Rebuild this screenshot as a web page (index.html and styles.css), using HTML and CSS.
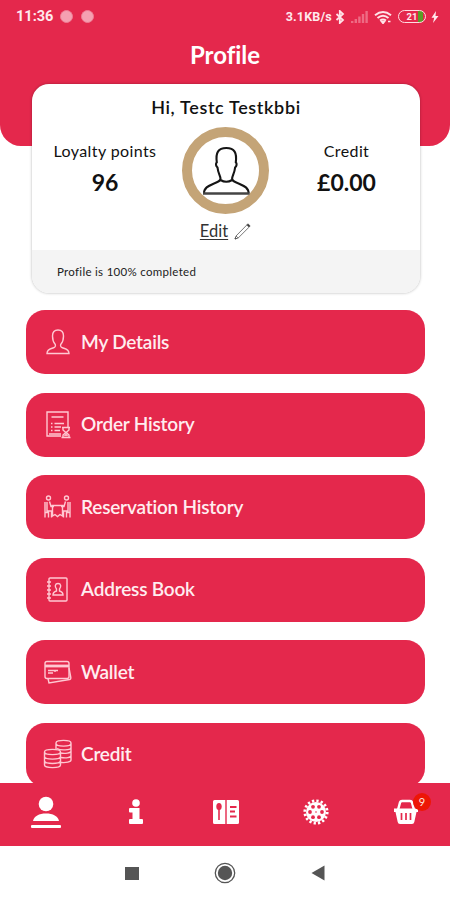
FILE: index.html
```html
<!DOCTYPE html>
<html lang="en">
<head>
    <meta charset="UTF-8">
    <meta name="viewport" content="width=device-width, initial-scale=1.0">
    <title>Profile</title>
    <link rel="stylesheet" href="styles.css">
</head>
<body>
    <div class="screen">
        <header class="header">
            <div class="status-bar">
                <div class="status-left">
                    <span class="time">11:36</span>
                    <span class="dot"></span>
                    <span class="dot"></span>
                </div>
                <div class="status-right">
                    <span class="speed">3.1KB/s</span>
                    <svg class="bluetooth" width="10" height="14" viewBox="0 0 10 14" fill="none" stroke="#ffe3e8" stroke-width="1.8"><path d="M1.5 4l6.5 6-3.2 3V1L8 4l-6.5 6"/></svg>
                    <svg class="signal" width="18" height="14" viewBox="0 0 18 14" fill="#ee6b84"><path d="M0 11h2.4v2H0zM3.6 9H6v4H3.600zM7.200 6.500h2.400V13H7.200zM10.800 4h2.400v9h-2.400zM14.400 1h2.400v12h-2.400z"/></svg>
                    <svg class="wifi" width="18" height="14" viewBox="0 0 18 14" fill="none" stroke="#ffe3e8" stroke-width="2"><path d="M1 5.200Q9-1.200 17 5.200M3.500 8Q9 3.500 14.500 8M6 10.500q3-2.200 6 0"/><path d="M7.500 11.500h3L9 13.500zM14 11.500h2.500" stroke-width="1.500"/></svg>
                    <span class="battery"><span class="battery-text">21</span></span>
                    <svg class="bolt" width="8" height="12" viewBox="0 0 8 12" fill="#ffe9ed"><path d="M5 0L.5 6.800h2.700L2 12l5.500-7H4.500z"/></svg>
                </div>
            </div>
            <h1 class="title">Profile</h1>
        </header>

        <section class="card">
            <h2 class="greeting">Hi, Testc Testkbbi</h2>
            <div class="summary">
                <div class="stat">
                    <span class="stat-label">Loyalty points</span>
                    <span class="stat-value">96</span>
                </div>
                <div class="profile">
                    <div class="avatar">
                        <svg width="50" height="52" viewBox="0 0 50 52" fill="none" stroke="#151515" stroke-width="2.1"><path d="M3 48.500c0-5.500 4-7.500 9.500-9.800C17 37 19.500 36 19.500 33.500c0-2.500-2.500-5.500-3-11-1.700-1.500-2-4-.7-5.200C14.500 8 17 3 25.300 3S36 8 34.800 17.300c1.300 1.200 1 3.700-.7 5.200-.5 5.500-3 8.500-3 11 0 2.500 2.500 3.500 7 5.200 5.500 2.300 9.500 4.300 9.500 9.800M19.500 35q5.800 3.500 11.600 0"/><path d="M2 48.500h46.500" stroke="#444" stroke-width="2.600"/></svg>
                    </div>
                    <a class="edit" href="#">
                        <span class="edit-text">Edit</span>
                        <svg width="17" height="17" viewBox="0 0 17 17" fill="none" stroke="#555" stroke-width=".8"><path d="M1 16l1-3L12.800 2l2.200 2.200L4.200 15zM2 13l2.200 2"/><path d="M13 1.800l1-1 2.200 2.200-1 1zM1 16l.5-1.500 1 1z" fill="#333"/></svg>
                    </a>
                </div>
                <div class="stat">
                    <span class="stat-label">Credit</span>
                    <span class="stat-value">£0.00</span>
                </div>
            </div>
            <div class="completion">Profile is 100% completed</div>
        </section>

        <main class="menu">
            <a class="menu-item" href="#">
                <svg class="menu-icon" viewBox="0 0 30 30"><path d="M4 26.500c0-4 3-4.500 6-5.500 2.500-.8 2.800-1.500 2.300-3.500C10.500 15.500 9.500 12 9.500 9c0-4 2-6 5.500-6s5.500 2 5.500 6c0 3-1 6.500-2.800 8.500-.5 2-.2 2.700 2.300 3.500 3 1 6 1.500 6 5.500z"/></svg>
                <span class="label">My Details</span>
            </a>
            <a class="menu-item" href="#">
                <svg class="menu-icon" viewBox="0 0 30 30"><path d="M18 27H4V3h21v15M8.500 8h12M8 14.500h1.500M11.500 14.500H21M8 18h1.500M11.500 18H18M8 21.500h1.500M11.500 21.500H17M6 25h12"/><path d="M19 18.500h8M20 18.500v2.500l2.800 2.500L20 26v2.500M26 18.500v2.500l-2.800 2.500L26 26v2.500M18.500 28.500h9M21.500 27l1.500-1.500 1.500 1.500"/></svg>
                <span class="label">Order History</span>
            </a>
            <a class="menu-item" href="#">
                <svg class="menu-icon" viewBox="0 0 30 30"><circle cx="5.500" cy="6" r="2"/><circle cx="23.500" cy="6" r="2"/><path d="M4 10v9h4.500v6.500M6.500 9.500l1.500 5h3M2 10v15.500M2 20.500h3.500v5M25 10v9h-4.500v6.500M22.500 9.500l-1.500 5h-3M27 10v15.500M27 20.500h-3.500v5M8.500 13.500h12M9.500 13.500V24l2.500-1.500 2.500 2 2.500-2 2.500 1.500V13.500"/></svg>
                <span class="label">Reservation History</span>
            </a>
            <a class="menu-item" href="#">
                <svg class="menu-icon" viewBox="0 0 30 30"><rect x="6" y="4" width="18" height="23" rx="1"/><path d="M4 8h4M4 12h4M4 16h4M4 20h4M4 24h4M10 21c0-3 1.500-3.500 3.500-4v-2c-2-2.500-1.500-5.500 1.500-5.500s3.500 3 1.500 5.500v2c2 .5 3.500 1 3.500 4z"/></svg>
                <span class="label">Address Book</span>
            </a>
            <a class="menu-item" href="#">
                <svg class="menu-icon" viewBox="0 0 30 30"><rect x="2" y="4.500" width="24" height="17" rx="2"/><path d="M2 9h24" stroke-width="2.800"/><path d="M5 13.500h10M5 16h5M12 13v2M5 21.500l1 4.500 20.500-3.500c1-.2 1.500-1 1.300-2L26 11"/></svg>
                <span class="label">Wallet</span>
            </a>
            <a class="menu-item" href="#">
                <svg class="menu-icon" viewBox="0 0 30 30"><path d="M13 10V4c0-3.500 15-3.500 15 0v17c0 2-5 3-10 2.500M13 4.500c0 3.500 15 3.500 15 0M14 9.500c3 2 14 2 14-1M17 14c5 .8 11 .2 11-2M18 18.500c5 .8 10 .2 10-2"/><path d="M1.500 13c0-3.500 16-3.500 16 0v13c0 3.500-16 3.500-16 0zM1.500 13c0 3.500 16 3.500 16 0M1.500 17.500c0 3.500 16 3.500 16 0M1.500 21.800c0 3.500 16 3.500 16 0"/></svg>
                <span class="label">Credit</span>
            </a>
        </main>

        <nav class="tab-bar">
            <a class="tab" href="#"><svg width="32" height="34" viewBox="0 0 32 34" fill="#fff"><circle cx="16" cy="9" r="7.300"/><path d="M3 26c1-5 6-7.500 13-7.500S28 21 29 26z"/><rect x="1" y="30" width="30" height="3" rx="1"/></svg></a>
            <a class="tab" href="#"><svg width="16" height="26" viewBox="0 0 16 26" fill="#fff"><circle cx="8" cy="4" r="3.800"/><path d="M2 9h9.500v11H14q1 0 1 1v3q0 1-1 1H2q-1 0-1-1v-3q0-1 1-1h2.500v-6.500H2q-1 0-1-1V10q0-1 1-1z"/></svg></a>
            <a class="tab" href="#"><svg width="28" height="26" viewBox="0 0 28 26"><path d="M2.500 1h10.800v24H2.500Q1 25 1 23.500v-21Q1 1 2.500 1zM14.700 1h10.800Q27 1 27 2.500v21q0 1.500-1.500 1.500H14.700z" fill="#fff"/><ellipse cx="7" cy="7.500" rx="2.700" ry="3.500" fill="#e4284c"/><path d="M7 10v11" stroke="#e4284c" stroke-width="1.600"/><path d="M18 8h6.500M18 12.500h5M18 17.500h6.500" stroke="#e4284c" stroke-width="1.800"/></svg></a>
            <a class="tab" href="#"><svg width="28" height="28" viewBox="-14 -14 28 28" fill="none"><circle r="10" fill="#fff"/><circle r="11.200" stroke="#fff" stroke-width="2.800" stroke-dasharray="2.300 2.098"/><g fill="#e4284c"><circle cx="6" cy="0" r="1.900"/><circle cx="-6" cy="0" r="1.900"/><circle cx="3" cy="5.200" r="1.900"/><circle cx="-3" cy="5.200" r="1.900"/><circle cx="3" cy="-5.200" r="1.900"/><circle cx="-3" cy="-5.200" r="1.900"/><circle r=".8"/></g></svg></a>
            <a class="tab" href="#">
                <svg width="26" height="26" viewBox="0 0 26 26"><path d="M5 11L7 3.500Q7.500 2 9 2h8q1.500 0 2 1.500l2 7.500" fill="none" stroke="#fff" stroke-width="2.500"/><path d="M1 9.500h24v3.500h-1.500l-2.200 10Q21 25 19 25H7q-2 0-2.300-2L2.500 13H1z" fill="#fff"/><path d="M8.500 14v7M13 14v7M17.500 14v7" stroke="#e4284c" stroke-width="1.700"/></svg>
                <span class="badge">9</span>
            </a>
        </nav>

        <div class="system-nav">
            <span class="sys"><span class="square"></span></span>
            <span class="sys"><svg width="22" height="22" viewBox="0 0 22 22"><circle cx="11" cy="11" r="9.700" fill="none" stroke="#555" stroke-width="1.300"/><circle cx="11" cy="11" r="7.200" fill="#555"/></svg></span>
            <span class="sys"><svg width="14" height="16" viewBox="0 0 14 16"><path d="M13.500.5v15L.5 8z" fill="#555"/></svg></span>
        </div>
    </div>
</body>
</html>
```

FILE: styles.css
```css
* {
    box-sizing: border-box;
}
body {
    margin: 0;
    font-family: Lato, "Liberation Sans", sans-serif;
    font-variant-ligatures: none;
    background-color: #fff;
    color: #111;
}
a {
    color: inherit;
    text-decoration: none;
}
h1, h2 {
    margin: 0;
}
.screen {
    display: flex;
    flex-direction: column;
    width: 450px;
    height: 900px;
    overflow: hidden;
}
.header {
    flex: none;
    height: 146px;
    background-color: #e4284c;
    border-radius: 0 0 21px 21px;
    color: #fff;
}
.status-bar {
    display: flex;
    justify-content: space-between;
    height: 33px;
    padding: 0 11px 0 16px;
    font-family: Roboto, sans-serif;
    color: #ffe9ed;
}
.status-left, .status-right {
    display: flex;
    align-items: center;
}
.time {
    font-size: 14.5px;
    font-weight: 700;
    margin-right: 7px;
}
.dot {
    width: 13px;
    height: 13px;
    margin-right: 8px;
    border-radius: 50%;
    background-color: #f5a0b1;
    border: 1px solid #f07d95;
}
.speed {
    font-size: 12.5px;
    font-weight: 700;
    letter-spacing: 0.2px;
}
.bluetooth {
    margin-left: 3px;
}
.signal {
    margin-left: 6px;
}
.wifi {
    margin-left: 5px;
}
.battery {
    display: flex;
    justify-content: center;
    align-items: center;
    width: 28px;
    height: 13px;
    margin-left: 6px;
    border: 1.5px solid #ffdce2;
    border-radius: 7px;
    background: linear-gradient(90deg, transparent 74%, #5a9d28 74%, #5a9d28 92%, transparent 92%);
}
.battery-text {
    font-size: 9.5px;
    font-weight: 700;
}
.bolt {
    margin-left: 5px;
}
.title {
    padding-top: 7px;
    font-size: 24px;
    line-height: 29px;
    font-weight: 700;
    text-align: center;
}
.card {
    flex: none;
    display: flex;
    flex-direction: column;
    width: 388px;
    height: 209px;
    margin: -62px 0 0 32px;
    background-color: #fff;
    border-radius: 17px;
    box-shadow: 0 0 3px rgba(0,0,0,0.3);
    overflow: hidden;
}
.greeting {
    padding-top: 12px;
    font-size: 18px;
    line-height: 23px;
    font-weight: 600;
    letter-spacing: 0.65px;
    text-align: center;
}
.summary {
    flex: 1;
    display: grid;
    grid-template-columns: 146px 95px 147px;
}
.stat {
    display: flex;
    flex-direction: column;
    align-items: center;
    padding-top: 22px;
}
.stat-label {
    font-size: 16px;
    line-height: 20px;
    letter-spacing: 0.4px;
}
.stat-value {
    padding-top: 8px;
    font-size: 23px;
    line-height: 27px;
    font-weight: 700;
}
.profile {
    display: flex;
    flex-direction: column;
    align-items: center;
    padding-top: 8px;
}
.avatar {
    display: flex;
    justify-content: center;
    align-items: center;
    width: 87px;
    height: 87px;
    border: 10px solid #c4a477;
    border-radius: 50%;
}
.edit {
    display: flex;
    align-items: center;
    gap: 6px;
    padding-top: 6px;
    font-size: 16.5px;
    line-height: 22px;
    color: #333;
}
.edit-text {
    text-decoration: underline;
    text-underline-offset: 2px;
}
.completion {
    height: 43px;
    padding-left: 25px;
    background-color: #f4f4f4;
    font-size: 11.5px;
    line-height: 43px;
    letter-spacing: 0.3px;
    color: #222;
}
.menu {
    flex: 1;
    display: flex;
    flex-direction: column;
    gap: 18.6px;
    min-height: 0;
    padding: 17px 25px 0 26px;
    overflow: hidden;
}
.menu-item {
    flex: none;
    display: flex;
    align-items: center;
    height: 64px;
    padding: 0 0 1px 17px;
    border-radius: 19px;
    background-color: #e4284c;
    color: #ffedf0;
}
.menu-icon {
    width: 30px;
    height: 30px;
    fill: none;
    stroke: #ffc8d2;
    stroke-width: 1.4;
}
.label {
    padding-left: 8px;
    font-size: 19px;
    line-height: 24px;
    font-weight: 600;
    letter-spacing: -0.2px;
}
.tab-bar {
    flex: none;
    display: grid;
    grid-template-columns: repeat(5, 90px);
    height: 63px;
    background-color: #e4284c;
}
.tab {
    position: relative;
    display: flex;
    justify-content: center;
    align-items: center;
    height: 57px;
    padding-left: 1px;
}
.badge {
    position: absolute;
    top: 10px;
    left: 53px;
    width: 18px;
    height: 18px;
    border-radius: 50%;
    background-color: #ed1606;
    color: #ffe3df;
    font-size: 11px;
    line-height: 18px;
    text-align: center;
}
.system-nav {
    flex: none;
    display: grid;
    grid-template-columns: repeat(3, 93px);
    justify-content: center;
    height: 54px;
}
.sys {
    display: flex;
    justify-content: center;
    align-items: center;
}
.square {
    width: 14px;
    height: 13px;
    background-color: #555;
}
```
